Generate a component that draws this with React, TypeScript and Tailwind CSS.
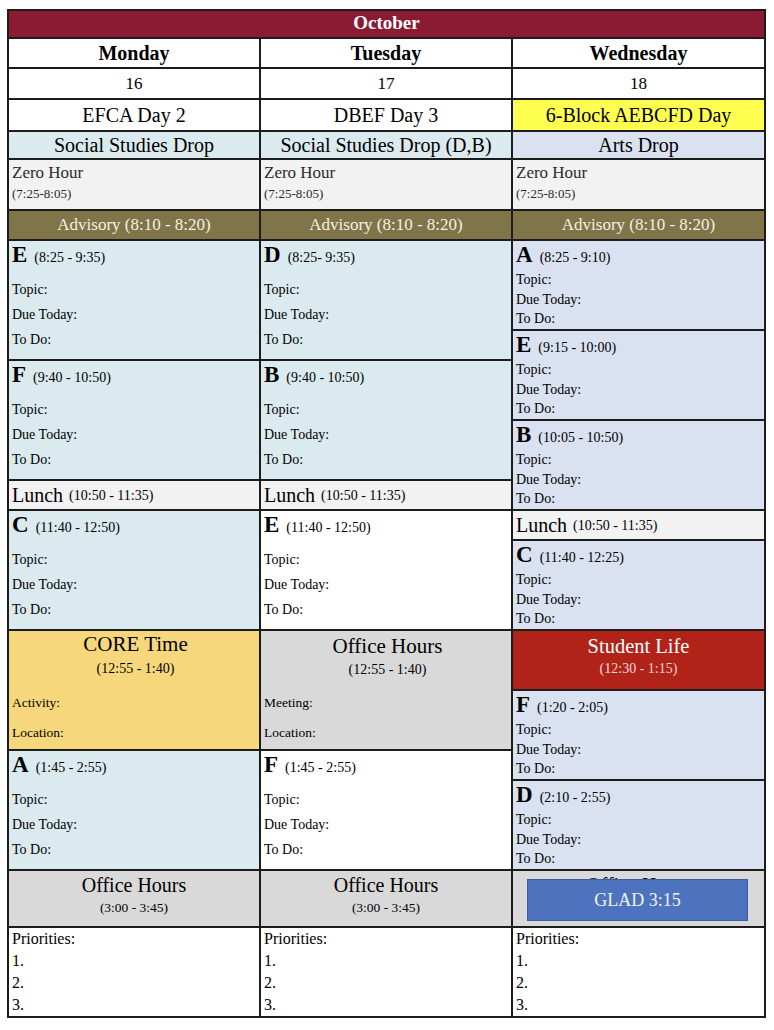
import React from 'react';

type BlockProps = {
  letter: string;
  time: string;
  bg: string;
  tight?: boolean;
};

function Block({ letter, time, bg, tight }: BlockProps) {
  return (
    <div className={`${bg} ${tight ? 'h-[88px]' : 'h-[118px]'} pl-[3px] pt-[2px] text-black`}>
      <div className={`flex items-baseline ${tight ? 'leading-[24px]' : 'leading-[24px]'}`}>
        <span className="text-[23px] font-bold">{letter}</span>
        <span className="ml-[7px] text-[14px]">{time}</span>
      </div>
      {tight ? (
        <div className="text-[14px] leading-[19.5px]">
          <div>Topic:</div>
          <div>Due Today:</div>
          <div>To Do:</div>
        </div>
      ) : (
        <div className="mt-[7px] text-[14px] leading-[25px]">
          <div>Topic:</div>
          <div>Due Today:</div>
          <div>To Do:</div>
        </div>
      )}
    </div>
  );
}

function Lunch() {
  return (
    <div className="flex h-[28px] items-center bg-[#f2f2f2] pl-[3px]">
      <span className="text-[20px]">Lunch</span>
      <span className="ml-[6px] text-[14px]">(10:50 - 11:35)</span>
    </div>
  );
}

function Priorities() {
  return (
    <div className="h-[88px] bg-white pl-[3px] text-[16px] leading-[22px] text-black">
      <div>Priorities:</div>
      <div>1.</div>
      <div>2.</div>
      <div>3.</div>
    </div>
  );
}

function OfficeHours({ time }: { time: string }) {
  return (
    <div className="flex h-[55px] flex-col items-center bg-[#d9d9d9] pt-[1px]">
      <div className="text-[20px] leading-[26px]">Office Hours</div>
      <div className="text-[13.5px] leading-[20px]">{time}</div>
    </div>
  );
}

export default function App() {
  const blue = 'bg-[#dbeaee]';
  const lav = 'bg-[#dae1f1]';

  return (
    <div className="min-h-[1030px] bg-white pl-[7px] pt-[9px] font-['Liberation_Serif','Times_New_Roman',serif]">
      <div className="flex w-[759px] flex-col gap-[2px] bg-[#1c1c1c] p-[2px] text-black">
        <div className="flex h-[26px] items-center justify-center bg-[#8b1a33] pb-[2px] text-[19px] font-bold text-white">
          October
        </div>

        <div className="grid grid-cols-[250px_250px_251px] gap-[2px]">
          {['Monday', 'Tuesday', 'Wednesday'].map((d) => (
            <div key={d} className="flex h-[28px] items-center justify-center bg-white pb-[1px] text-[20px] font-bold">
              {d}
            </div>
          ))}
          {['16', '17', '18'].map((d) => (
            <div key={d} className="flex h-[29px] items-center justify-center bg-white text-[17px]">
              {d}
            </div>
          ))}
          <div className="flex h-[30px] items-center justify-center bg-white text-[20px]">EFCA Day 2</div>
          <div className="flex h-[30px] items-center justify-center bg-white text-[20px]">DBEF Day 3</div>
          <div className="flex h-[30px] items-center justify-center bg-[#ffff4f] text-[20px]">6-Block AEBCFD Day</div>

          <div className="flex h-[26px] items-center justify-center bg-[#dbeaee] text-[20px]">Social Studies Drop</div>
          <div className="flex h-[26px] items-center justify-center bg-[#dbeaee] text-[20px]">Social Studies Drop (D,B)</div>
          <div className="flex h-[26px] items-center justify-center bg-[#dae1f1] text-[20px]">Arts Drop</div>

          {[0, 1, 2].map((i) => (
            <div key={i} className="h-[49px] bg-[#f2f2f2] pl-[3px] pt-[1px] text-[#2b2b2b]">
              <div className="text-[17px] leading-[24px]">Zero Hour</div>
              <div className="text-[13px] leading-[18px]">(7:25-8:05)</div>
            </div>
          ))}

          {[0, 1, 2].map((i) => (
            <div key={i} className="flex h-[28px] items-center justify-center bg-[#7f7549] text-[17px] text-[#f3f0e6]">
              Advisory (8:10 - 8:20)
            </div>
          ))}

          {/* Monday */}
          <div className="flex flex-col gap-[2px]">
            <Block letter="E" time="(8:25 - 9:35)" bg={blue} />
            <Block letter="F" time="(9:40 - 10:50)" bg={blue} />
            <Lunch />
            <Block letter="C" time="(11:40 - 12:50)" bg={blue} />
            <div className="h-[118px] bg-[#f7d77b] pl-[3px] pt-[1px]">
              <div className="text-center text-[21px] leading-[24px]">CORE Time</div>
              <div className="text-center text-[14px] leading-[26px]">(12:55 - 1:40)</div>
              <div className="mt-[6px] text-[13.5px] leading-[30px]">Activity:</div>
              <div className="text-[13.5px] leading-[30px]">Location:</div>
            </div>
            <Block letter="A" time="(1:45 - 2:55)" bg={blue} />
          </div>

          {/* Tuesday */}
          <div className="flex flex-col gap-[2px]">
            <Block letter="D" time="(8:25- 9:35)" bg={blue} />
            <Block letter="B" time="(9:40 - 10:50)" bg={blue} />
            <Lunch />
            <Block letter="E" time="(11:40 - 12:50)" bg="bg-white" />
            <div className="h-[118px] bg-[#d9d9d9] pl-[3px] pt-[1px]">
              <div className="text-center text-[21px] leading-[28px]">Office Hours</div>
              <div className="text-center text-[14px] leading-[20px]">(12:55 - 1:40)</div>
              <div className="mt-[8px] text-[13.5px] leading-[30px]">Meeting:</div>
              <div className="text-[13.5px] leading-[30px]">Location:</div>
            </div>
            <Block letter="F" time="(1:45 - 2:55)" bg="bg-white" />
          </div>

          {/* Wednesday */}
          <div className="flex flex-col gap-[2px]">
            <Block letter="A" time="(8:25 - 9:10)" bg={lav} tight />
            <Block letter="E" time="(9:15 - 10:00)" bg={lav} tight />
            <Block letter="B" time="(10:05 - 10:50)" bg={lav} tight />
            <Lunch />
            <Block letter="C" time="(11:40 - 12:25)" bg={lav} tight />
            <div className="flex h-[58px] flex-col items-center bg-[#b12318] pt-[2px] text-white">
              <div className="text-[20.5px] leading-[26px]">Student Life</div>
              <div className="text-[14px] leading-[20px] text-[#f3dcdc]">(12:30 - 1:15)</div>
            </div>
            <Block letter="F" time="(1:20 - 2:05)" bg={lav} tight />
            <Block letter="D" time="(2:10 - 2:55)" bg={lav} tight />
          </div>

          <OfficeHours time="(3:00 - 3:45)" />
          <OfficeHours time="(3:00 - 3:45)" />
          <div className="relative">
            <OfficeHours time="(3:15 - 4:00)" />
            <div className="absolute left-[14px] top-[8px] flex h-[42px] w-[221px] items-center justify-center border border-[#3d5f9e] bg-[#4e73be] text-[18px] text-[#eef2fb]">
              GLAD 3:15
            </div>
          </div>

          <Priorities />
          <Priorities />
          <Priorities />
        </div>
      </div>
    </div>
  );
}
